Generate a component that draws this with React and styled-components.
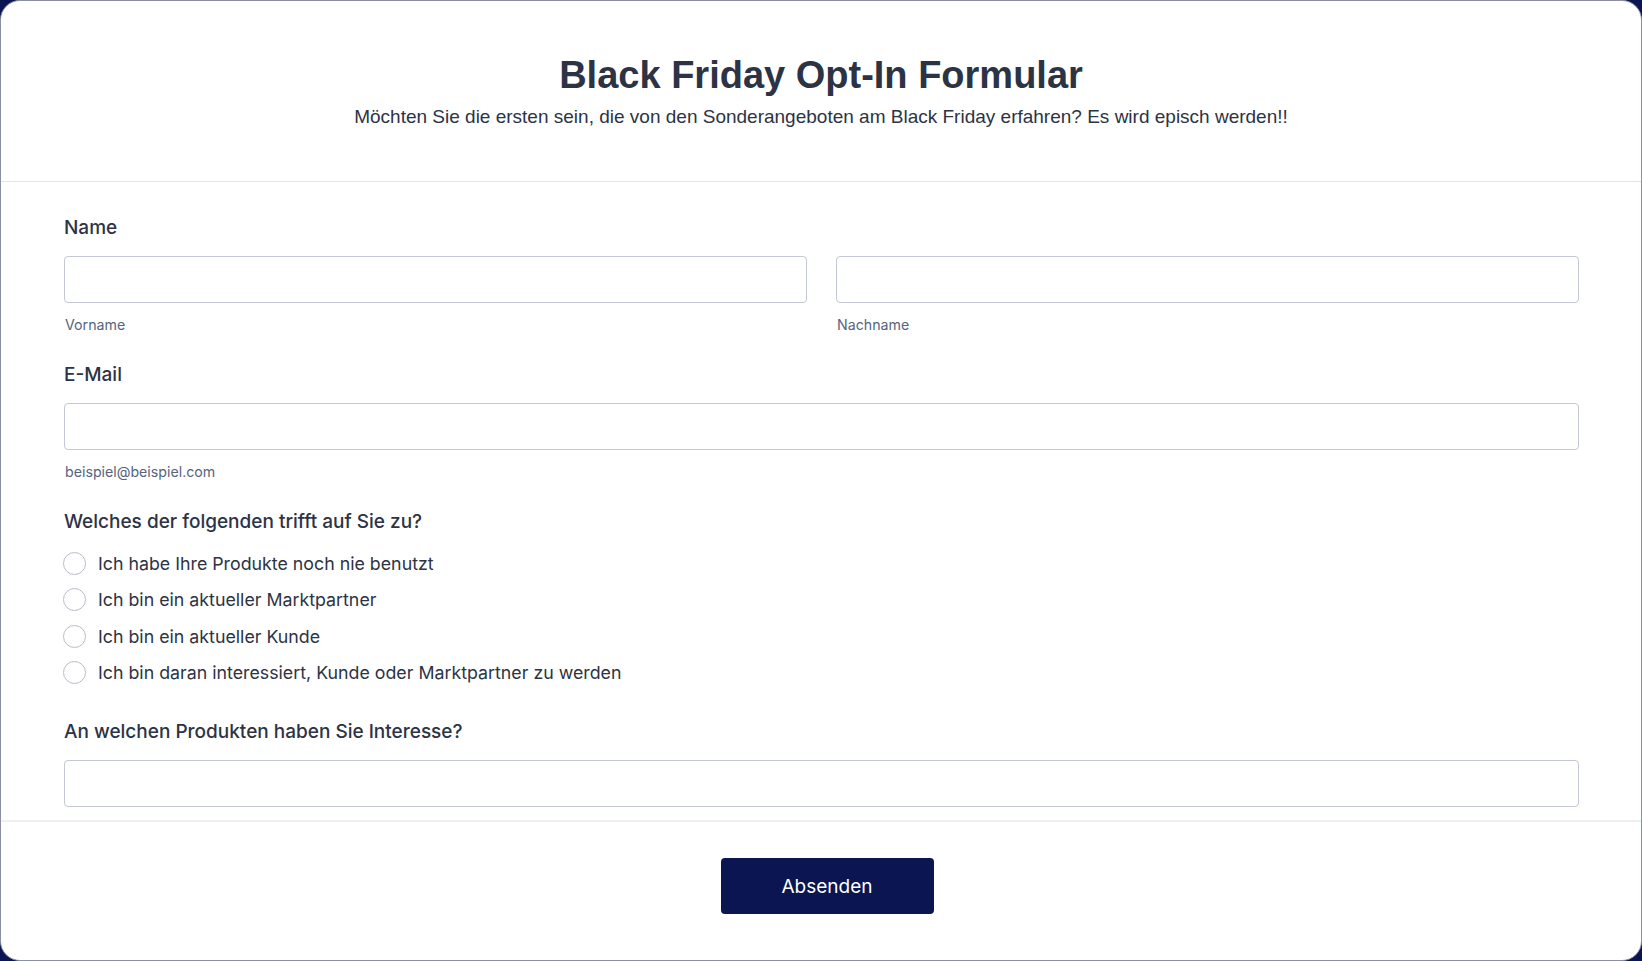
import React from 'react';
import styled, { createGlobalStyle } from 'styled-components';

const GlobalStyle = createGlobalStyle`
  html, body {
    margin: 0;
    padding: 0;
    background: #0a1551;
  }
  * {
    box-sizing: border-box;
  }
`;

const Card = styled.form`
  display: flex;
  flex-direction: column;
  width: 1642px;
  height: 961px;
  background: #ffffff;
  border: 1px solid #8c8ea4;
  border-radius: 20px;
  overflow: hidden;
`;

const Header = styled.header`
  display: flex;
  flex-direction: column;
  align-items: center;
  height: 181px;
  padding-top: 51px;
  border-bottom: 1px solid #e3e5ea;
  font-family: "Liberation Sans", Arial, sans-serif;
  color: #2c3345;
`;

const Title = styled.h1`
  margin: 0;
  font-size: 38px;
  line-height: 46px;
  font-weight: 700;
`;

const Subtitle = styled.p`
  margin: 8px 0 0;
  font-size: 19px;
  line-height: 22px;
`;

const Body = styled.div`
  flex: 1;
  overflow: hidden;
  padding: 35px 62px 0 63px;
  font-family: Inter, "Noto Sans", sans-serif;
  color: #2c3345;
`;

const Field = styled.div`
  margin-bottom: ${p => p.$gap || 30}px;
`;

const Label = styled.div`
  font-size: 19px;
  line-height: 22px;
  font-weight: 500;
  margin-bottom: ${p => p.$gap || 17}px;
`;

const Row = styled.div`
  display: grid;
  grid-template-columns: 1fr 1fr;
  column-gap: 29px;
`;

const Input = styled.input`
  display: block;
  width: 100%;
  height: 47px;
  border: 1px solid #c3c8d4;
  border-radius: 4px;
  background: #fff;
  font-family: inherit;
  font-size: 16px;
  padding: 0 12px;
  outline: none;
`;

const Sublabel = styled.div`
  margin-top: 13px;
  padding-left: 1px;
  font-size: 14.2px;
  line-height: 18px;
  color: #57647e;
`;

const Options = styled.div`
  display: flex;
  flex-direction: column;
  gap: 12.5px;
`;

const Option = styled.label`
  display: flex;
  align-items: center;
  gap: 12px;
  height: 24px;
  font-size: 17.8px;
  color: #2c3345;
`;

const Radio = styled.span`
  width: 23px;
  height: 23px;
  margin-left: -1px;
  border-radius: 50%;
  border: 1px solid #b8bdc9;
  background: #fff;
  flex: none;
`;

const Footer = styled.footer`
  display: flex;
  justify-content: center;
  height: 140px;
  padding-top: 36px;
  border-top: 2px solid #eef0f4;
`;

const SubmitButton = styled.button`
  width: 213px;
  height: 56px;
  margin-left: 12px;
  border: none;
  border-radius: 4px;
  background: #0a1551;
  color: #ffffff;
  font-family: Inter, "Noto Sans", sans-serif;
  font-size: 19px;
  cursor: pointer;
`;

const options = [
  'Ich habe Ihre Produkte noch nie benutzt',
  'Ich bin ein aktueller Marktpartner',
  'Ich bin ein aktueller Kunde',
  'Ich bin daran interessiert, Kunde oder Marktpartner zu werden',
];

export default function App() {
  return (
    <>
      <GlobalStyle />
      <Card onSubmit={e => e.preventDefault()}>
        <Header>
          <Title>Black Friday Opt-In Formular</Title>
          <Subtitle>
            Möchten Sie die ersten sein, die von den Sonderangeboten am Black Friday erfahren? Es wird episch werden!!
          </Subtitle>
        </Header>

        <Body>
          <Field>
            <Label>Name</Label>
            <Row>
              <div>
                <Input type="text" />
                <Sublabel>Vorname</Sublabel>
              </div>
              <div>
                <Input type="text" />
                <Sublabel>Nachname</Sublabel>
              </div>
            </Row>
          </Field>

          <Field>
            <Label>E-Mail</Label>
            <Input type="email" />
            <Sublabel>beispiel@beispiel.com</Sublabel>
          </Field>

          <Field $gap={36}>
            <Label $gap={18}>Welches der folgenden trifft auf Sie zu?</Label>
            <Options>
              {options.map(o => (
                <Option key={o}>
                  <Radio />
                  {o}
                </Option>
              ))}
            </Options>
          </Field>

          <Field>
            <Label>An welchen Produkten haben Sie Interesse?</Label>
            <Input type="text" />
          </Field>
        </Body>

        <Footer>
          <SubmitButton type="submit">Absenden</SubmitButton>
        </Footer>
      </Card>
    </>
  );
}
